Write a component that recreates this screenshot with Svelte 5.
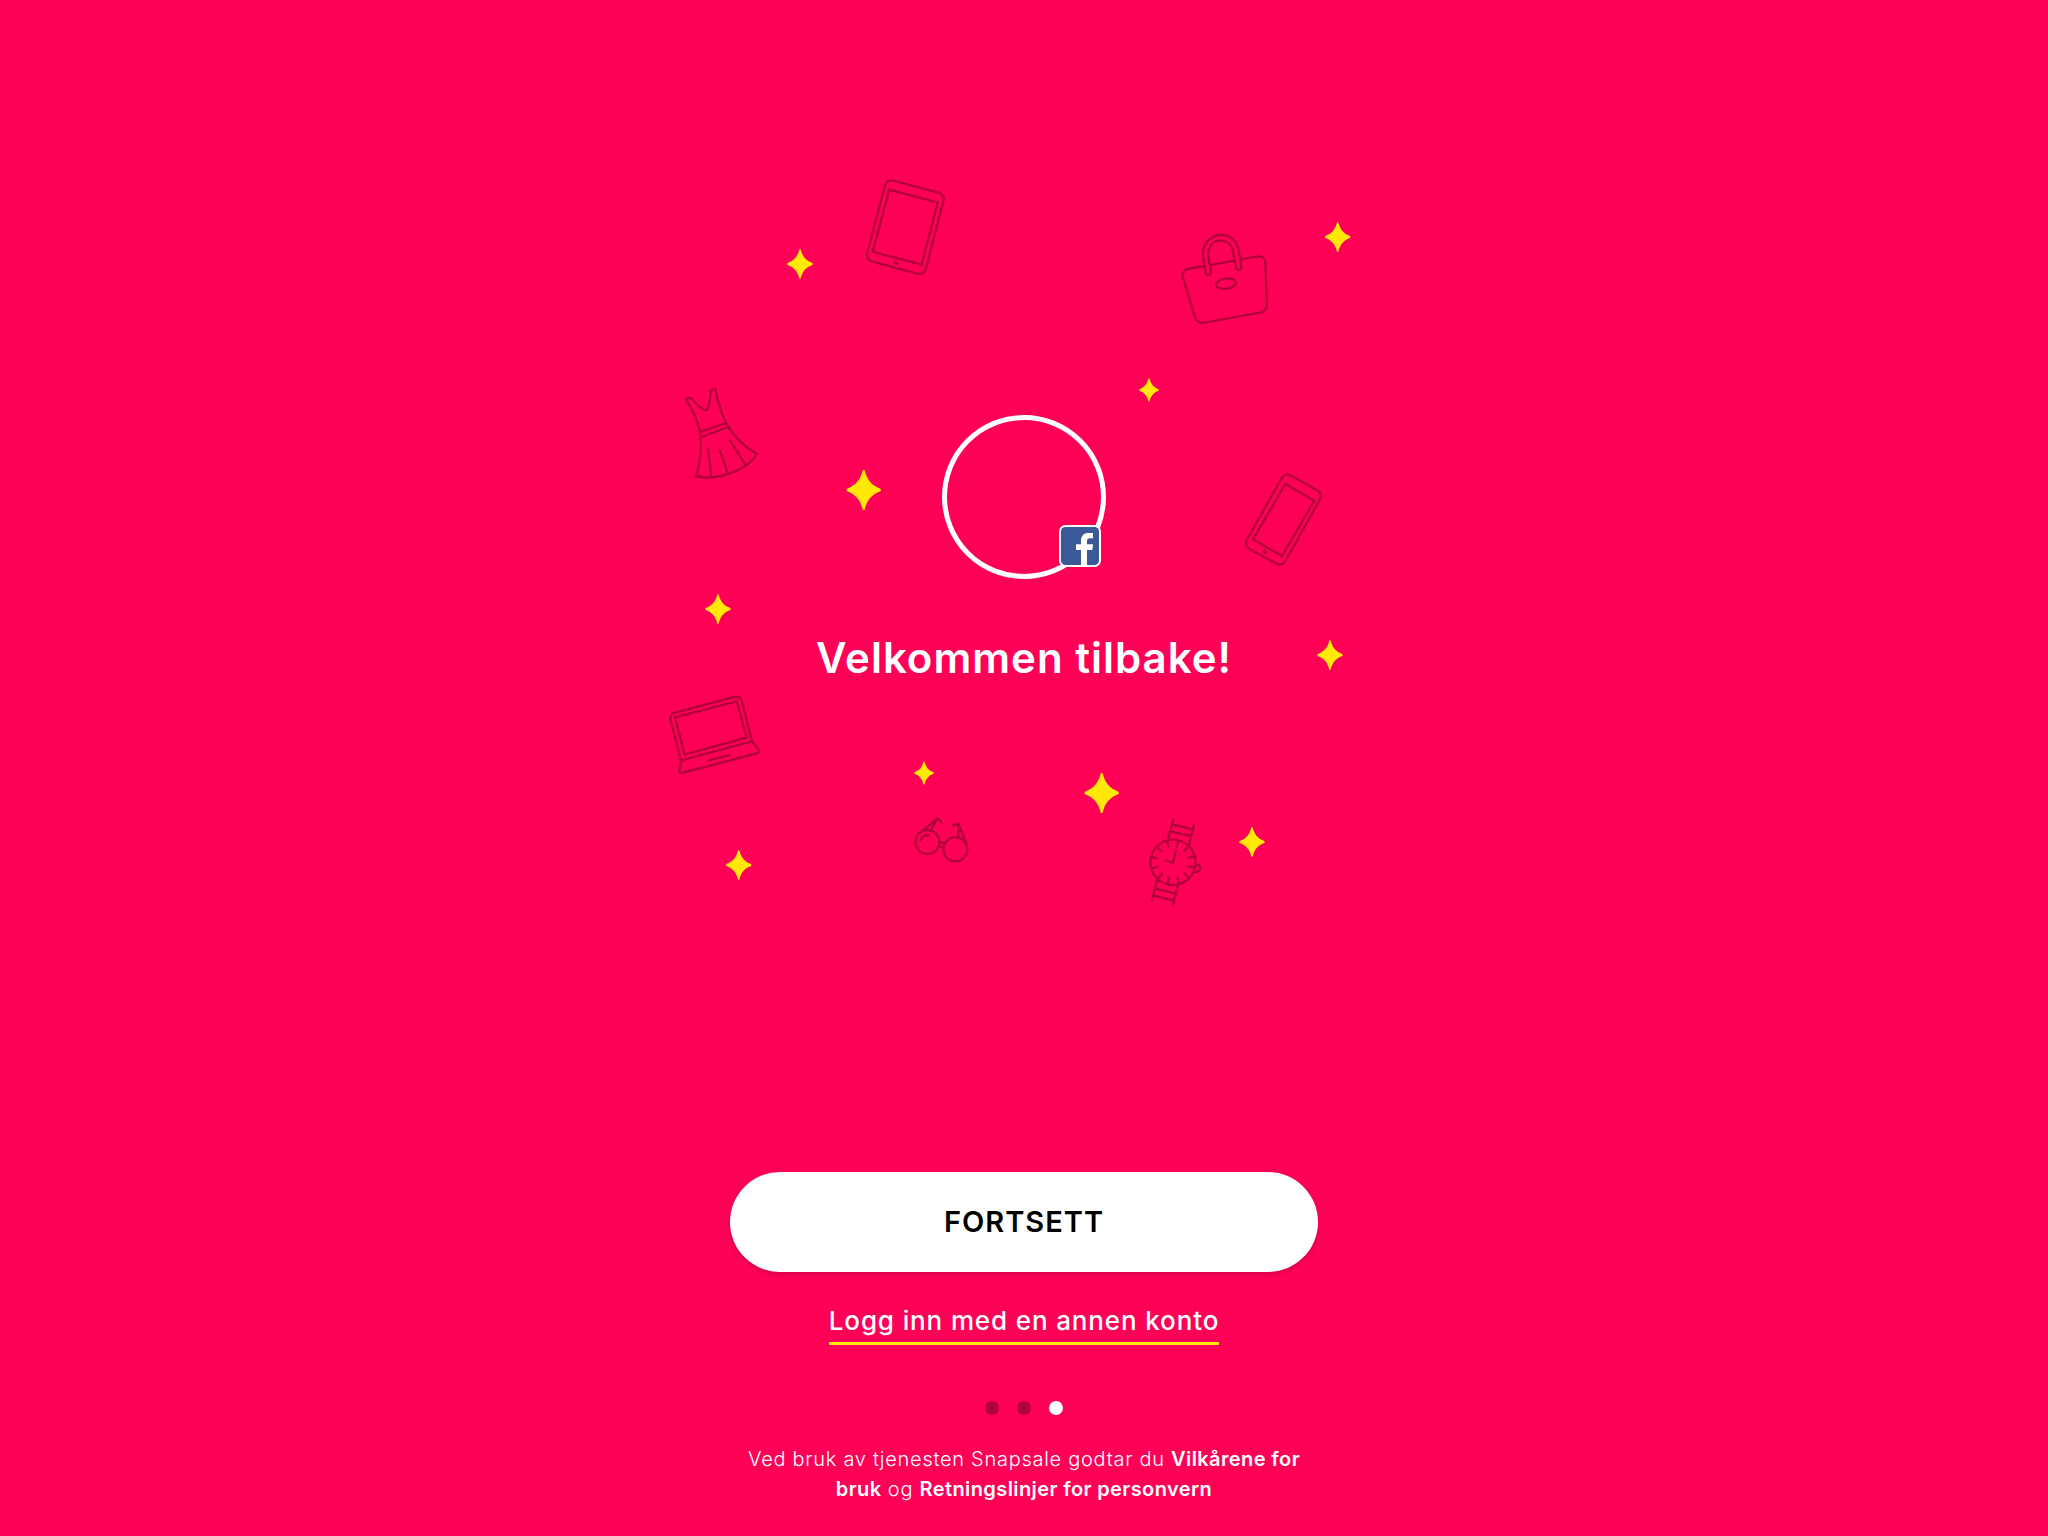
<script>
  const stars = [
    { x: 800, y: 264, s: 0.242 },
    { x: 1337.7, y: 237, s: 0.242 },
    { x: 863.7, y: 490, s: 0.328 },
    { x: 1149, y: 390, s: 0.187 },
    { x: 718, y: 609, s: 0.242 },
    { x: 1330, y: 655, s: 0.242 },
    { x: 924, y: 773, s: 0.187 },
    { x: 1101.7, y: 793, s: 0.328 },
    { x: 1252, y: 842, s: 0.242 },
    { x: 738.7, y: 865, s: 0.242 }
  ];
  // Hour marks of the watch, in degrees
  const ticks = Array.from({ length: 12 }, (_, i) => i * 30);
  const pages = [false, false, true];
</script>

<main class="screen">
  <svg class="scene" viewBox="0 0 2048 1536" aria-hidden="true">
    <!-- tablet -->
    <g class="item" transform="translate(770 160) scale(.33333)">
      <path d="M369 62 L505 98 Q525 104 520 124 L468 325 Q462 346 441 341 L308 305 Q287 299 292 278 L344 79 Q350 57 369 62Z" />
      <path d="M358 89 L503 128 L455 314 L308 275Z" stroke-linejoin="miter" />
      <circle class="solid" cx="377" cy="308" r="7" />
    </g>
    <!-- handbag -->
    <g class="item" transform="translate(1160 210) scale(.33333)">
      <path d="M84 177 L293 139 Q314 137 316 158 L321 282 Q321 303 301 308 L133 338 Q112 341 105 322 L68 200 Q64 182 84 177Z" />
      <path class="cover" d="M137 187 L129 137 C126 106 148 78 178 75 C209 72 232 94 236 122 L244 170 C245 181 230 183 228 173 L220 127 C217 103 200 90 180 91 C157 93 142 112 145 137 L153 186 C153 197 138 198 137 187Z" />
      <ellipse cx="198" cy="221" rx="30" ry="15" transform="rotate(-8 198 221)" />
    </g>
    <!-- dress -->
    <g class="item" transform="translate(670 370) scale(.33333)">
      <path d="M47 88 L62 83 C76 97 86 114 108 121 C121 115 120 80 122 62 L136 56 C143 95 153 128 170 163 C194 203 222 230 260 251 C250 274 222 293 186 308 C151 321 116 328 78 318 C93 275 95 235 91 190 C83 150 66 115 47 88Z" />
      <path d="M90 186 L168 159 M94 201 L174 171 M114 237 L124 319 M149 240 L172 305 M181 213 L224 281" />
    </g>
    <!-- phone -->
    <g class="item" transform="translate(1220 450) scale(.33333)">
      <path d="M214 77 L291 121 Q309 132 299 150 L196 333 Q184 350 167 340 L88 296 Q73 285 81 268 L184 87 Q195 67 214 77Z" />
      <path d="M196 102 L283 152 L186 318 L99 268Z" stroke-linejoin="miter" />
      <circle class="solid" cx="135" cy="305" r="7" />
    </g>
    <!-- laptop -->
    <g class="item" transform="translate(650 580) scale(.33333)">
      <path d="M93 541 L62 422 Q58 403 76 398 L252 351 Q271 347 276 365 L306 484 L328 512 Q330 518 324 519 L95 579 Q88 580 88 573Z M93 541 L306 484" />
      <path d="M75 412 L260 364 L290 473 L104 524Z" stroke-linejoin="miter" />
      <path d="M174 542 L238 525" />
    </g>
    <!-- glasses -->
    <g class="item" transform="translate(890 750) scale(.33333)">
      <circle cx="112" cy="276" r="36" />
      <circle cx="196" cy="298" r="36" />
      <path d="M149 275 L162 280 M147 288 L159 292 M90 248 L143 205 L155 217 M143 205 L123 238 M188 226 L206 222 L205 260 M206 222 L229 281 M92 271 Q100 251 119 256" />
    </g>
    <!-- watch -->
    <g class="item" transform="translate(1130 800) scale(.33333)">
      <circle cx="129" cy="187" r="68" />
      <path d="M130 58 L113 122 M192 75 L176 138 M127 73 L187 88 M122 94 L181 108 M82 239 L66 300 M145 254 L128 316 M77 266 L137 281 M71 287 L132 302 M138 152 L129 188 L107 182 M197 195 Q212 193 210 205 Q206 220 191 214" />
      {#each ticks as angle}
        <path d="M129 124 L129 139" transform="rotate({angle + 14} 129 187)" />
      {/each}
    </g>

    {#each stars as star}
      <path
        class="star"
        d="M-3 -60 Q0 -62 3 -60 C9 -32 25 -13 51 -4 Q54 0 51 4 C25 13 9 32 3 60 Q0 62 -3 60 C-9 32 -25 13 -51 4 Q-54 0 -51 -4 C-25 -13 -9 -32 -3 -60Z"
        transform="translate({star.x} {star.y}) scale({star.s})"
      />
    {/each}
  </svg>

  <section class="welcome">
    <div class="avatar">
      <svg class="badge" viewBox="0 0 42 42" aria-label="Facebook">
        <rect width="42" height="42" rx="6.5" fill="#fff" />
        <rect x="2" y="2" width="38" height="38" rx="4.5" fill="#3b5998" />
        <path
          d="M22 40 V25 H17 V19.300 H22 V16 C22 10.500 25 8 29.500 8 H34 V13.300 H31 C28.800 13.300 28 14.200 28 16.200 V19.300 H34 L33.300 25 H28 V40Z"
          fill="#fff"
        />
      </svg>
    </div>
    <h1>Velkommen tilbake!</h1>
  </section>

  <section class="actions">
    <button>FORTSETT</button>
    <a class="other" href="#login">Logg inn med en annen konto</a>
    <div class="dots">
      {#each pages as active}
        <span class:active></span>
      {/each}
    </div>
    <p class="terms">
      <span class="line">Ved bruk av tjenesten Snapsale godtar du <b>Vilkårene for</b></span>
      <span class="line"><b>bruk</b> og <b>Retningslinjer for personvern</b></span>
    </p>
  </section>
</main>

<style>
  :global(body) {
    margin: 0;
    background: #ff0057;
  }
  .screen {
    position: relative;
    box-sizing: border-box;
    width: 2048px;
    height: 1536px;
    padding: 415px 0 32px;
    display: flex;
    flex-direction: column;
    justify-content: space-between;
    align-items: center;
    overflow: hidden;
    color: #fff;
    background: #ff0057;
    font-family: Inter, "Liberation Sans", sans-serif;
  }
  .scene {
    position: absolute;
    inset: 0;
    width: 100%;
    height: 100%;
  }
  .item {
    fill: none;
    stroke: #b2003d;
    stroke-width: 7;
    stroke-linecap: round;
    stroke-linejoin: round;
  }
  .solid {
    fill: #b2003d;
    stroke: none;
  }
  .cover {
    fill: #ff0057;
  }
  .star {
    fill: #ffe80a;
  }
  .welcome,
  .actions {
    position: relative;
    display: flex;
    flex-direction: column;
    align-items: center;
  }
  .avatar {
    position: relative;
    box-sizing: border-box;
    width: 164px;
    height: 164px;
    border: 5px solid #fff;
    border-radius: 50%;
  }
  .badge {
    position: absolute;
    right: 0;
    bottom: 7px;
    width: 42px;
    height: 42px;
  }
  h1 {
    margin: 52px 0 0;
    font-size: 42px;
    line-height: 54px;
    font-weight: 600;
    letter-spacing: 1px;
    white-space: nowrap;
  }
  button {
    width: 588px;
    height: 100px;
    padding: 0;
    border: 0;
    border-radius: 50px;
    color: #000;
    background: #fff;
    box-shadow: 0 2px 5px rgba(0, 0, 0, 0.18);
    font: 600 29px/100px Inter, "Liberation Sans", sans-serif;
    letter-spacing: 1px;
  }
  .other {
    margin-top: 31px;
    padding-bottom: 3px;
    border-bottom: 3px solid #ffe80a;
    color: #fff;
    font-size: 26px;
    line-height: 36px;
    font-weight: 500;
    letter-spacing: 0.87px;
    text-decoration: none;
    white-space: nowrap;
  }
  .dots {
    display: flex;
    gap: 18px;
    margin-top: 56px;
  }
  .dots span {
    width: 14px;
    height: 14px;
    border-radius: 50%;
    background: #b2003d;
  }
  .dots .active {
    background: #fff;
  }
  .terms {
    margin: 29px 0 0;
    font-size: 20px;
    line-height: 30px;
    font-weight: 300;
    letter-spacing: 0.72px;
    text-align: center;
    white-space: nowrap;
  }
  .line {
    display: block;
  }
  b {
    font-weight: 600;
    letter-spacing: 0.4px;
  }
</style>
